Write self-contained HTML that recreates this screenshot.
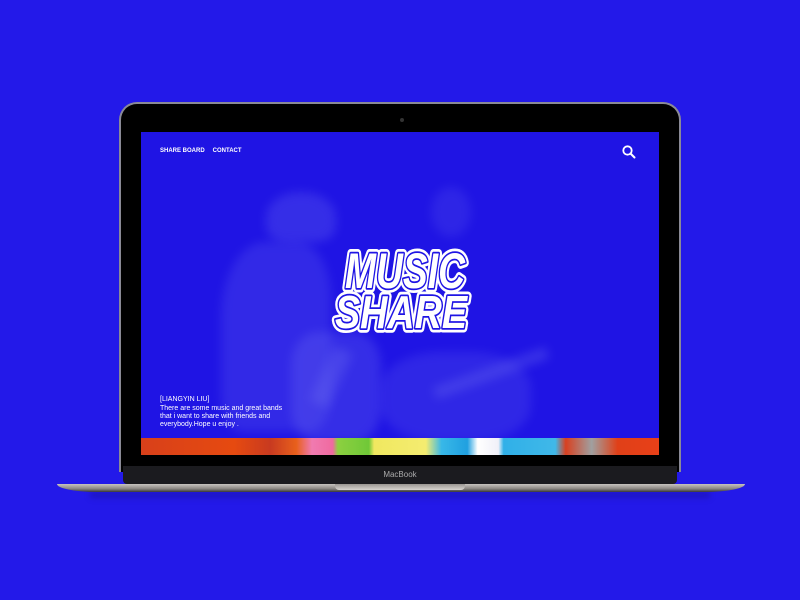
<!DOCTYPE html>
<html><head><meta charset="utf-8"><style>
*{margin:0;padding:0;box-sizing:border-box}
body{width:800px;height:600px;background:#2319e9;position:relative;overflow:hidden;font-family:"Liberation Sans",sans-serif}
.lid{position:absolute;left:119px;top:102px;width:562px;height:370px;background:#000;border-radius:18px 18px 0 0;border:2px solid #8a8a96;border-bottom:none}
.screen{position:absolute;left:141px;top:132px;width:518px;height:323px;background:#1f14e4;overflow:hidden}
.blob{position:absolute;background:#6a6af0;filter:blur(5px)}
.nav{position:absolute;left:19px;top:16px;color:#fff;font-size:6px;font-weight:bold}
.nav span{margin-right:8px}
.cap{position:absolute;left:19px;top:264px;color:#fff;font-size:7px;line-height:8px}
.strip{position:absolute;left:0;top:306px;width:518px;height:17px;background:linear-gradient(90deg,#d8401a 0,#e64a10 18%,#c83a20 25%,#e8601c 30%,#f07ab0 33%,#f06aa0 37%,#8cd040 38%,#70c838 44%,#f0e860 45%,#f4ec70 55%,#38b8e8 58%,#20a0e0 63%,#fff 65%,#f0f0f8 69%,#30b0e8 70%,#40b8e8 80%,#d84020 82%,#a0a0a0 87%,#e04018 92%,#e84018 100%)}
.chin{position:absolute;left:123px;top:466px;width:554px;height:18px;background:#1b1b1f;border-radius:0 0 4px 4px;text-align:center;color:#aaa;font-size:8px;line-height:18px}
.base{position:absolute;left:57px;top:484px;width:688px;height:8px;background:linear-gradient(#c8c4c0,#8a8682 60%,#3a3836);border-radius:0 0 40px 40px/0 0 8px 8px}
.notch{position:absolute;left:335px;top:484px;width:130px;height:6px;background:linear-gradient(#9a9692,#d8d4d0);border-radius:0 0 4px 4px}
.shadow{position:absolute;left:90px;top:492px;width:620px;height:6px;background:#1a12b0;filter:blur(3px);opacity:.7}
</style></head><body>
<div class="shadow"></div>
<div class="lid"><div style="position:absolute;left:279px;top:14px;width:4px;height:4px;border-radius:50%;background:#333"></div></div>
<div class="screen">
 <div class="blob" style="left:80px;top:110px;width:110px;height:190px;border-radius:40% 30% 20% 20%;opacity:.25"></div>
 <div class="blob" style="left:125px;top:60px;width:70px;height:50px;border-radius:50% 50% 30% 30%;opacity:.3"></div>
 <div class="blob" style="left:150px;top:200px;width:90px;height:110px;border-radius:30%;opacity:.3"></div>
 <div class="blob" style="left:180px;top:215px;width:20px;height:60px;transform:rotate(25deg);opacity:.35"></div>
 <div class="blob" style="left:240px;top:220px;width:150px;height:90px;border-radius:40%;opacity:.22"></div>
 <div class="blob" style="left:290px;top:235px;width:120px;height:12px;transform:rotate(-20deg);opacity:.35"></div>
 <div class="blob" style="left:290px;top:55px;width:40px;height:50px;border-radius:50%;opacity:.2"></div>
 <div class="nav"><span>SHARE BOARD</span><span>CONTACT</span></div>
 <svg style="position:absolute;left:480px;top:12px" width="16" height="16" viewBox="0 0 16 16"><circle cx="6.5" cy="6.5" r="4.2" fill="none" stroke="#fff" stroke-width="1.8"/><path d="M9.5 9.5L13.5 13.5" stroke="#fff" stroke-width="2" stroke-linecap="round"/></svg>
 <svg style="position:absolute;left:188px;top:108px" width="146" height="96" viewBox="0 0 146 96">
  <g font-family="Liberation Sans" font-weight="bold" font-style="italic" stroke-linejoin="round">
   <text x="16" y="48" font-size="50" textLength="120" lengthAdjust="spacingAndGlyphs" fill="#fff" stroke="#fff" stroke-width="9">MUSIC</text>
   <text x="16" y="48" font-size="50" textLength="120" lengthAdjust="spacingAndGlyphs" fill="#fff" stroke="#1f14e4" stroke-width="3.5" paint-order="stroke">MUSIC</text>
   <text x="6" y="88" font-size="46" textLength="132" lengthAdjust="spacingAndGlyphs" fill="#fff" stroke="#fff" stroke-width="9">SHARE</text>
   <text x="6" y="88" font-size="46" textLength="132" lengthAdjust="spacingAndGlyphs" fill="#fff" stroke="#1f14e4" stroke-width="3.5" paint-order="stroke">SHARE</text>
  </g>
 </svg>
 <div class="cap">[LIANGYIN LIU]<br><span style="display:block;margin-top:1px">There are some music and great bands<br>that i want to share with friends and<br>everybody.Hope u enjoy .</span></div>
 <div class="strip"></div>
</div>
<div class="chin">MacBook</div>
<div class="base"></div>
<div class="notch"></div>
</body></html>
